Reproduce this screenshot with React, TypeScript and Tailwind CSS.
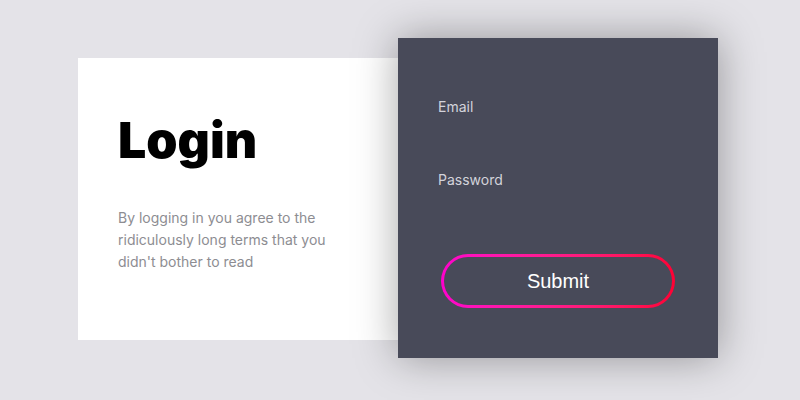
import React from 'react';

const App: React.FC = () => {
  return (
    <div className="h-screen w-full bg-[#e4e3e8] flex items-center justify-center pr-1 pb-1 font-['Inter',sans-serif]">
      <div className="w-[320px] h-[282px] mt-[2px] bg-white px-10 pt-[52px]">
        <h1 className="text-[50px] leading-[60px] font-black text-black">Login</h1>
        <p className="mt-[37px] text-[14px] leading-[22px] text-[#8d8d92]">
          By logging in you agree to the ridiculously long terms that you didn't bother to read
        </p>
      </div>
      <div className="w-[320px] h-[320px] bg-[#484a59] shadow-[0_0_40px_rgba(0,0,0,0.35)] px-10 pt-[59px] flex flex-col">
        <label className="text-[14px] leading-[20px] text-[#d3d3db]">Email</label>
        <input className="h-[53px] bg-transparent outline-none text-white text-[14px]" />
        <label className="text-[14px] leading-[20px] text-[#d3d3db]">Password</label>
        <input type="password" className="h-[64px] bg-transparent outline-none text-white text-[14px]" />
        <div className="self-center w-[234px] h-[54px] rounded-full p-[3px] bg-linear-to-r from-[#ff00cc] to-[#ff0033]">
          <button className="w-full h-full rounded-full bg-[#484a59] text-white text-[20px] font-['Liberation_Sans',Arial,sans-serif]">
            Submit
          </button>
        </div>
      </div>
    </div>
  );
};

export default App;
